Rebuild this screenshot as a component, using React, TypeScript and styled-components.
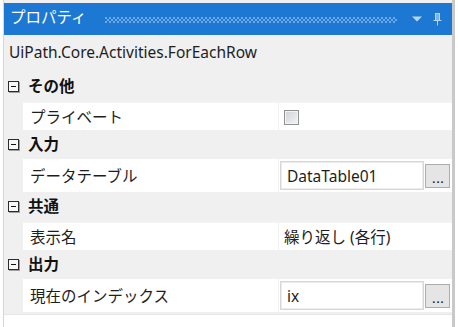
import styled, { createGlobalStyle } from "styled-components"

const GlobalStyle = createGlobalStyle`
    html, body {
        margin: 0;
        padding: 0;
        background: #ffffff;
    }
    body {
        font-family: "Noto Sans", "Noto Sans CJK JP", sans-serif;
    }
`

type Prop = { name: string, kind: "check" | "text" | "plain", value?: string }
type Category = { title: string, props: Prop[] }

const categories: Category[] = [
    { title: "その他", props: [{ name: "プライベート", kind: "check" }] },
    { title: "入力", props: [{ name: "データテーブル", kind: "text", value: "DataTable01" }] },
    { title: "共通", props: [{ name: "表示名", kind: "plain", value: "繰り返し (各行)" }] },
    { title: "出力", props: [{ name: "現在のインデックス", kind: "text", value: "ix" }] },
]

export default function App() {
    return (
        <>
            <GlobalStyle />
            <Window>
                <Panel>
                    <TitleBar>
                        <Title>プロパティ</Title>
                        <Grip />
                        <svg width="12" height="6" viewBox="0 0 12 6">
                            <path d="M1 0.5 L11 0.5 L6 5.5 Z" fill="#b9d5f2" />
                        </svg>
                        <svg width="9" height="13" viewBox="0 0 9 13" style={{ marginLeft: 10 }}>
                            <path d="M2 0.5 H7 M2.5 0.5 V7.5 M6.5 0.5 V7.5 M0.5 7.5 H8.5 M4.5 7.5 V12.5" stroke="#b9d5f2" strokeWidth="1" fill="none" />
                            <rect x="3" y="1" width="3" height="6" fill="#7fb0e6" />
                        </svg>
                    </TitleBar>
                    <Description>UiPath.Core.Activities.ForEachRow</Description>
                    {categories.map(cat => (
                        <div key={cat.title}>
                            <CategoryRow>
                                <Toggle />
                                <CategoryTitle>{cat.title}</CategoryTitle>
                            </CategoryRow>
                            {cat.props.map(p => (
                                <PropRow key={p.name} tall={p.kind === "text"}>
                                    <PropName>{p.name}</PropName>
                                    <PropValue>
                                        {p.kind === "check" && <CheckBox />}
                                        {p.kind === "plain" && <PlainValue>{p.value}</PlainValue>}
                                        {p.kind === "text" && (
                                            <>
                                                <TextBox>{p.value}</TextBox>
                                                <EllipsisButton>. . .</EllipsisButton>
                                            </>
                                        )}
                                    </PropValue>
                                </PropRow>
                            ))}
                        </div>
                    ))}
                    <Filler />
                </Panel>
            </Window>
        </>
    )
}

const Window = styled.div`
    width: 458px;
    height: 327px;
    overflow: hidden;
    background: #ffffff;
`

const Panel = styled.div`
    width: 452px;
    height: 327px;
    margin-left: 3px;
    padding-top: 3px;
    box-sizing: border-box;
    background: #f0f0f0;
    border-left: 1px solid #d6d6d6;
    border-right: 3px solid #c9c9c9;
    display: flex;
    flex-direction: column;
`

const TitleBar = styled.div`
    height: 32px;
    background: #1d78d3;
    display: flex;
    align-items: center;
    padding: 0 10px 0 6px;
`

const Title = styled.span`
    color: #ffffff;
    font-size: 15.5px;
    line-height: 1;
    margin-top: -2px;
`

const Grip = styled.div`
    flex: 1;
    height: 6px;
    margin: 2px 14px 0 18px;
    background-image:
        radial-gradient(circle at 1px 1px, #6ea8e6 0.9px, transparent 1px),
        radial-gradient(circle at 3px 3px, #6ea8e6 0.9px, transparent 1px);
    background-size: 4px 4px;
`

const Description = styled.div`
    height: 37px;
    padding: 7px 0 0 5px;
    box-sizing: border-box;
    font-size: 15.5px;
    color: #1e1e1e;
    line-height: 20px;
`

const CategoryRow = styled.div`
    height: 29px;
    display: flex;
    align-items: center;
    padding-left: 4px;
`

const Toggle = styled.span`
    position: relative;
    width: 9px;
    height: 9px;
    border: 1px solid #2c2c2c;
    box-shadow: 1px 1px 0 #a0a0a0;
    background: #f8f8f8;
    &::after {
        content: "";
        position: absolute;
        left: 2px;
        top: 4px;
        width: 5px;
        height: 1px;
        background: #111111;
    }
`

const CategoryTitle = styled.span`
    margin-left: 9px;
    font-size: 15.5px;
    font-weight: 700;
    color: #111111;
    margin-top: -2px;
`

const PropRow = styled.div<{ tall?: boolean }>`
    height: ${props => props.tall ? "33px" : "29px"};
    margin-left: 19px;
    display: grid;
    grid-template-columns: 255px 1fr;
    column-gap: 1px;
    border-top: ${props => props.tall ? "0" : "2px solid #f3f3f3"};
    box-sizing: border-box;
`

const PropName = styled.div`
    background: #ffffff;
    display: flex;
    align-items: center;
    padding-left: 7px;
    font-size: 15.5px;
    color: #1e1e1e;
`

const PropValue = styled.div`
    background: #ffffff;
    display: flex;
    align-items: center;
    padding-left: 1px;
`

const PlainValue = styled.span`
    padding-left: 4px;
    font-size: 15.5px;
    color: #1e1e1e;
`

const CheckBox = styled.span`
    width: 13px;
    height: 13px;
    margin-left: 4px;
    margin-top: 1px;
    border: 1px solid #919191;
    box-shadow: inset 0 0 0 1px #f4f4f4;
    background: linear-gradient(135deg, #cfd2d6, #f4f4f4);
`

const TextBox = styled.div`
    width: 144px;
    height: 29px;
    box-sizing: border-box;
    border: 1px solid #d6d6d6;
    box-shadow: inset 0 0 0 1px #ececec;
    display: flex;
    align-items: center;
    padding-left: 6px;
    font-size: 15.5px;
    color: #1e1e1e;
`

const EllipsisButton = styled.div`
    width: 25px;
    height: 24px;
    margin-left: 1px;
    box-sizing: border-box;
    border: 1px solid #acacac;
    background: #e5e5e5;
    display: flex;
    align-items: center;
    justify-content: center;
    font-family: "Liberation Sans", sans-serif;
    font-size: 11px;
    font-weight: 700;
    letter-spacing: -1px;
    color: #1e1e1e;
    padding: 6px 0 0 0;
    white-space: nowrap;
`

const Filler = styled.div`
    flex: 1;
    margin-top: 2px;
    background: #ffffff;
    border-top: 1px solid #e6e6e6;
`
